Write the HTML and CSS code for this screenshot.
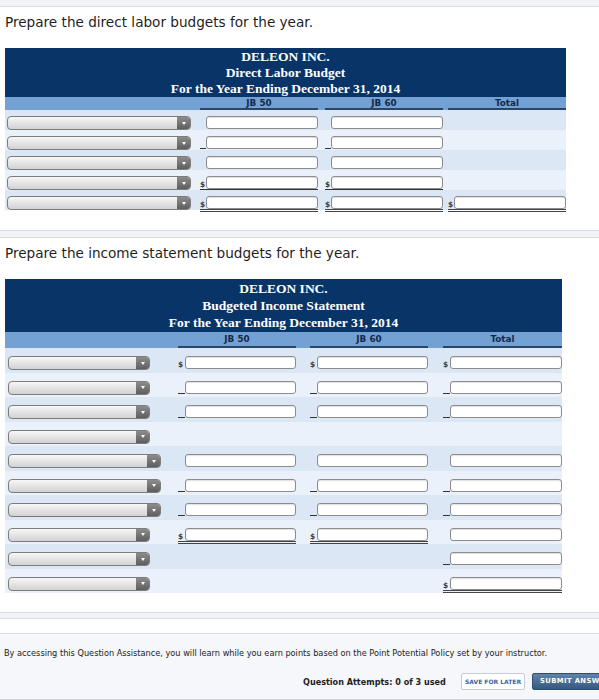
FILE: index.html
```html
<!DOCTYPE html>
<html>
<head>
<meta charset="utf-8">
<link rel="stylesheet" href="styles.css">
</head>
<body>
<div class="band top"></div>
<section class="card c1">
  <p class="prompt">Prepare the direct labor budgets for the year.</p>
  <div class="tbl w1">
    <div class="thead t1h">
      <div>DELEON INC.</div>
      <div>Direct Labor Budget</div>
      <div>For the Year Ending December 31, 2014</div>
    </div>
    <div class="colhead ch1 g1">
      <div></div><div></div><div class="ch">JB 50</div><div></div><div class="ch">JB 60</div><div></div><div class="ch">Total</div>
    </div>
    <div class="rows r1">
      <div class="row g1">
        <div class="l"><div class="sel s184"><i></i></div></div><div></div>
        <div class="v"><span class="pre"></span><span class="inp"></span></div><div></div>
        <div class="v"><span class="pre"></span><span class="inp"></span></div><div></div>
        <div></div>
      </div>
      <div class="row g1">
        <div class="l"><div class="sel s184"><i></i></div></div><div></div>
        <div class="v u"><span class="pre"></span><span class="inp"></span></div><div></div>
        <div class="v u"><span class="pre"></span><span class="inp"></span></div><div></div>
        <div></div>
      </div>
      <div class="row g1">
        <div class="l"><div class="sel s184"><i></i></div></div><div></div>
        <div class="v"><span class="pre"></span><span class="inp"></span></div><div></div>
        <div class="v"><span class="pre"></span><span class="inp"></span></div><div></div>
        <div></div>
      </div>
      <div class="row g1">
        <div class="l"><div class="sel s184"><i></i></div></div><div></div>
        <div class="v s1"><span class="pre">$</span><span class="inp"></span></div><div></div>
        <div class="v s1"><span class="pre">$</span><span class="inp"></span></div><div></div>
        <div></div>
      </div>
      <div class="row g1">
        <div class="l"><div class="sel s184"><i></i></div></div><div></div>
        <div class="v s2"><span class="pre">$</span><span class="inp"></span></div><div></div>
        <div class="v s2"><span class="pre">$</span><span class="inp"></span></div><div></div>
        <div class="v s2"><span class="pre">$</span><span class="inp"></span></div>
      </div>
    </div>
  </div>
</section>
<div class="band mid"></div>
<section class="card c2">
  <p class="prompt">Prepare the income statement budgets for the year.</p>
  <div class="tbl w2">
    <div class="thead t2h">
      <div>DELEON INC.</div>
      <div>Budgeted Income Statement</div>
      <div>For the Year Ending December 31, 2014</div>
    </div>
    <div class="colhead ch2 g2">
      <div></div><div></div><div class="ch">JB 50</div><div></div><div class="ch">JB 60</div><div></div><div class="ch">Total</div>
    </div>
    <div class="rows r2">
      <div class="row g2">
        <div class="l"><div class="sel nar"><i></i></div></div><div></div>
        <div class="v p7"><span class="pre">$</span><span class="inp"></span></div><div></div>
        <div class="v p7"><span class="pre">$</span><span class="inp"></span></div><div></div>
        <div class="v p7"><span class="pre">$</span><span class="inp"></span></div>
      </div>
      <div class="row g2">
        <div class="l"><div class="sel nar"><i></i></div></div><div></div>
        <div class="v p7 u"><span class="pre"></span><span class="inp"></span></div><div></div>
        <div class="v p7 u"><span class="pre"></span><span class="inp"></span></div><div></div>
        <div class="v p7 u"><span class="pre"></span><span class="inp"></span></div>
      </div>
      <div class="row g2">
        <div class="l"><div class="sel nar"><i></i></div></div><div></div>
        <div class="v p7 u"><span class="pre"></span><span class="inp"></span></div><div></div>
        <div class="v p7 u"><span class="pre"></span><span class="inp"></span></div><div></div>
        <div class="v p7 u"><span class="pre"></span><span class="inp"></span></div>
      </div>
      <div class="row g2">
        <div class="l"><div class="sel nar"><i></i></div></div><div></div>
        <div></div><div></div><div></div><div></div><div></div>
      </div>
      <div class="row g2">
        <div class="l"><div class="sel wid"><i></i></div></div><div></div>
        <div class="v p7"><span class="pre"></span><span class="inp"></span></div><div></div>
        <div class="v p7"><span class="pre"></span><span class="inp"></span></div><div></div>
        <div class="v p7"><span class="pre"></span><span class="inp"></span></div>
      </div>
      <div class="row g2">
        <div class="l"><div class="sel wid"><i></i></div></div><div></div>
        <div class="v p7 u"><span class="pre"></span><span class="inp"></span></div><div></div>
        <div class="v p7 u"><span class="pre"></span><span class="inp"></span></div><div></div>
        <div class="v p7 u"><span class="pre"></span><span class="inp"></span></div>
      </div>
      <div class="row g2">
        <div class="l"><div class="sel wid"><i></i></div></div><div></div>
        <div class="v p7 u"><span class="pre"></span><span class="inp"></span></div><div></div>
        <div class="v p7 u"><span class="pre"></span><span class="inp"></span></div><div></div>
        <div class="v p7 u"><span class="pre"></span><span class="inp"></span></div>
      </div>
      <div class="row g2">
        <div class="l"><div class="sel nar"><i></i></div></div><div></div>
        <div class="v p7 s2"><span class="pre">$</span><span class="inp"></span></div><div></div>
        <div class="v p7 s2"><span class="pre">$</span><span class="inp"></span></div><div></div>
        <div class="v p7"><span class="pre"></span><span class="inp"></span></div>
      </div>
      <div class="row g2">
        <div class="l"><div class="sel nar"><i></i></div></div><div></div>
        <div></div><div></div><div></div><div></div>
        <div class="v p7 u"><span class="pre"></span><span class="inp"></span></div>
      </div>
      <div class="row g2">
        <div class="l"><div class="sel nar"><i></i></div></div><div></div>
        <div></div><div></div><div></div><div></div>
        <div class="v p7 s2"><span class="pre">$</span><span class="inp"></span></div>
      </div>
    </div>
  </div>
</section>
<div class="band bot"></div>
<div class="spacer"></div>
<footer class="foot">
  <p class="note">By accessing this Question Assistance, you will learn while you earn points based on the Point Potential Policy set by your instructor.</p>
  <div class="actions">
    <span class="attempts">Question Attempts: 0 of 3 used</span>
    <span class="btn save">SAVE FOR LATER</span>
    <span class="btn submit">SUBMIT ANSWER</span>
  </div>
</footer>
</body>
</html>
```
FILE: styles.css
```css
html, body {
  margin: 0;
  padding: 0;
}
body {
  width: 599px;
  height: 700px;
  overflow: hidden;
  background: #fff;
  font-family: "DejaVu Sans", Verdana, sans-serif;
  color: #222;
}
.band {
  background: #f2f3f6;
  border-bottom: 1px solid #d9dce2;
}
.band.top { height: 6px; }
.band.mid { height: 6px; border-top: 1px solid #d9dce2; }
.band.bot { height: 5px; border-top: 1px solid #d9dce2; }
.card { box-sizing: border-box; }
.c1 { height: 223px; padding-top: 7px; }
.c2 { height: 374px; padding-top: 7px; }
.prompt {
  margin: 0 0 17px 0;
  padding-left: 5px;
  font-size: 13.6px;
  line-height: 17px;
  color: #1e1e1e;
}
.tbl { margin-left: 5px; }
.w1 { width: 561px; }
.w2 { width: 557px; }
.thead {
  background: #083468;
  color: #fff;
  text-align: center;
  font-family: "Liberation Serif", "Times New Roman", serif;
  font-weight: bold;
  font-size: 13.5px;
}
.t1h { padding: 1px 0 0; line-height: 16px; }
.t2h { padding: 1px 0 1px; line-height: 17px; }
.colhead {
  background: #74a1d4;
  font-size: 8.8px;
  font-weight: bold;
  color: #10294a;
  text-align: center;
}
.ch1 { height: 13px; }
.ch1 .ch { padding-top: 1px; line-height: 10px; border-bottom: 2px solid #2a4566; }
.ch2 { height: 16px; }
.ch2 .ch { padding-top: 2px; line-height: 11px; border-bottom: 2px solid #2a4566; }
.g1 {
  display: grid;
  grid-template-columns: 190px 5px 118px 7px 118px 5px 118px;
}
.g2 {
  display: grid;
  grid-template-columns: 160px 13px 118px 14px 118px 15px 119px;
}
.row { box-sizing: border-box; align-items: start; }
.r1 .row { height: 20px; padding-top: 6px; }
.r2 .row { height: 24.5px; padding-top: 8px; }
.rows .row:nth-child(odd) { background: #dce7f5; }
.rows .row:nth-child(even) { background: #eaf1fa; }
.sel {
  box-sizing: border-box;
  height: 14px;
  border: 1px solid #7c7c7c;
  border-radius: 4px;
  background: linear-gradient(#f8f8f8, #e6e6e6 45%, #d2d2d2);
  display: flex;
  justify-content: flex-end;
  overflow: hidden;
}
.sel i {
  width: 13px;
  height: 100%;
  background: linear-gradient(#8c8c8c, #5e5e5e);
  display: flex;
  align-items: center;
  justify-content: center;
}
.sel i::after {
  content: "";
  width: 0;
  height: 0;
  border-left: 2.5px solid transparent;
  border-right: 2.5px solid transparent;
  border-top: 3px solid #fff;
}
.s184 { width: 184px; margin-left: 2px; }
.nar { width: 142px; margin-left: 3px; }
.wid { width: 153px; margin-left: 3px; }
.v {
  display: flex;
  align-items: flex-end;
  height: 13px;
}
.pre {
  flex: 0 0 6px;
  width: 6px;
  font-size: 7.5px;
  line-height: 8px;
  font-weight: bold;
  color: #3a3a3a;
}
.p7 .pre { flex-basis: 7px; width: 7px; }
.u .pre { height: 12px; border-bottom: 1px solid #333; }
.inp {
  flex: 1;
  box-sizing: border-box;
  height: 13px;
  background: #fff;
  border: 1px solid #8c8c8c;
  border-radius: 3px;
  box-shadow: inset 0 1px 1px rgba(0,0,0,0.12);
}
.s1 { border-bottom: 1px solid #333; }
.s2 { border-bottom: 3px double #444; }
.spacer { height: 14px; }
.foot {
  box-sizing: border-box;
  height: 67px;
  background: #f5f7fa;
  border-top: 1px solid #d9dce2;
  border-bottom: 1px solid #cfd2d8;
  padding: 14px 0 0 4px;
  overflow: hidden;
}
.note {
  margin: 0;
  font-size: 8.2px;
  line-height: 10px;
  color: #222;
  white-space: nowrap;
}
.actions {
  display: flex;
  align-items: center;
  margin-top: 15px;
  padding-left: 299px;
  white-space: nowrap;
}
.attempts {
  font-size: 8.1px;
  font-weight: bold;
  color: #1e1e1e;
  width: 143px;
  flex: 0 0 143px;
}
.btn {
  box-sizing: border-box;
  height: 17px;
  line-height: 15px;
  font-size: 6px;
  font-weight: bold;
  border-radius: 2px;
  flex: 0 0 auto;
  text-align: center;
}
.save {
  margin-left: 15px;
  width: 64px;
  background: #fff;
  border: 1px solid #c5cbd4;
  color: #3c66a0;
}
.submit {
  margin-left: 7px;
  width: 80px;
  padding-left: 7px;
  text-align: left;
  font-size: 6.8px;
  background: linear-gradient(#6283aa, #36587f);
  border: 1px solid #2e4d72;
  color: #fff;
  letter-spacing: 0.4px;
}
```
